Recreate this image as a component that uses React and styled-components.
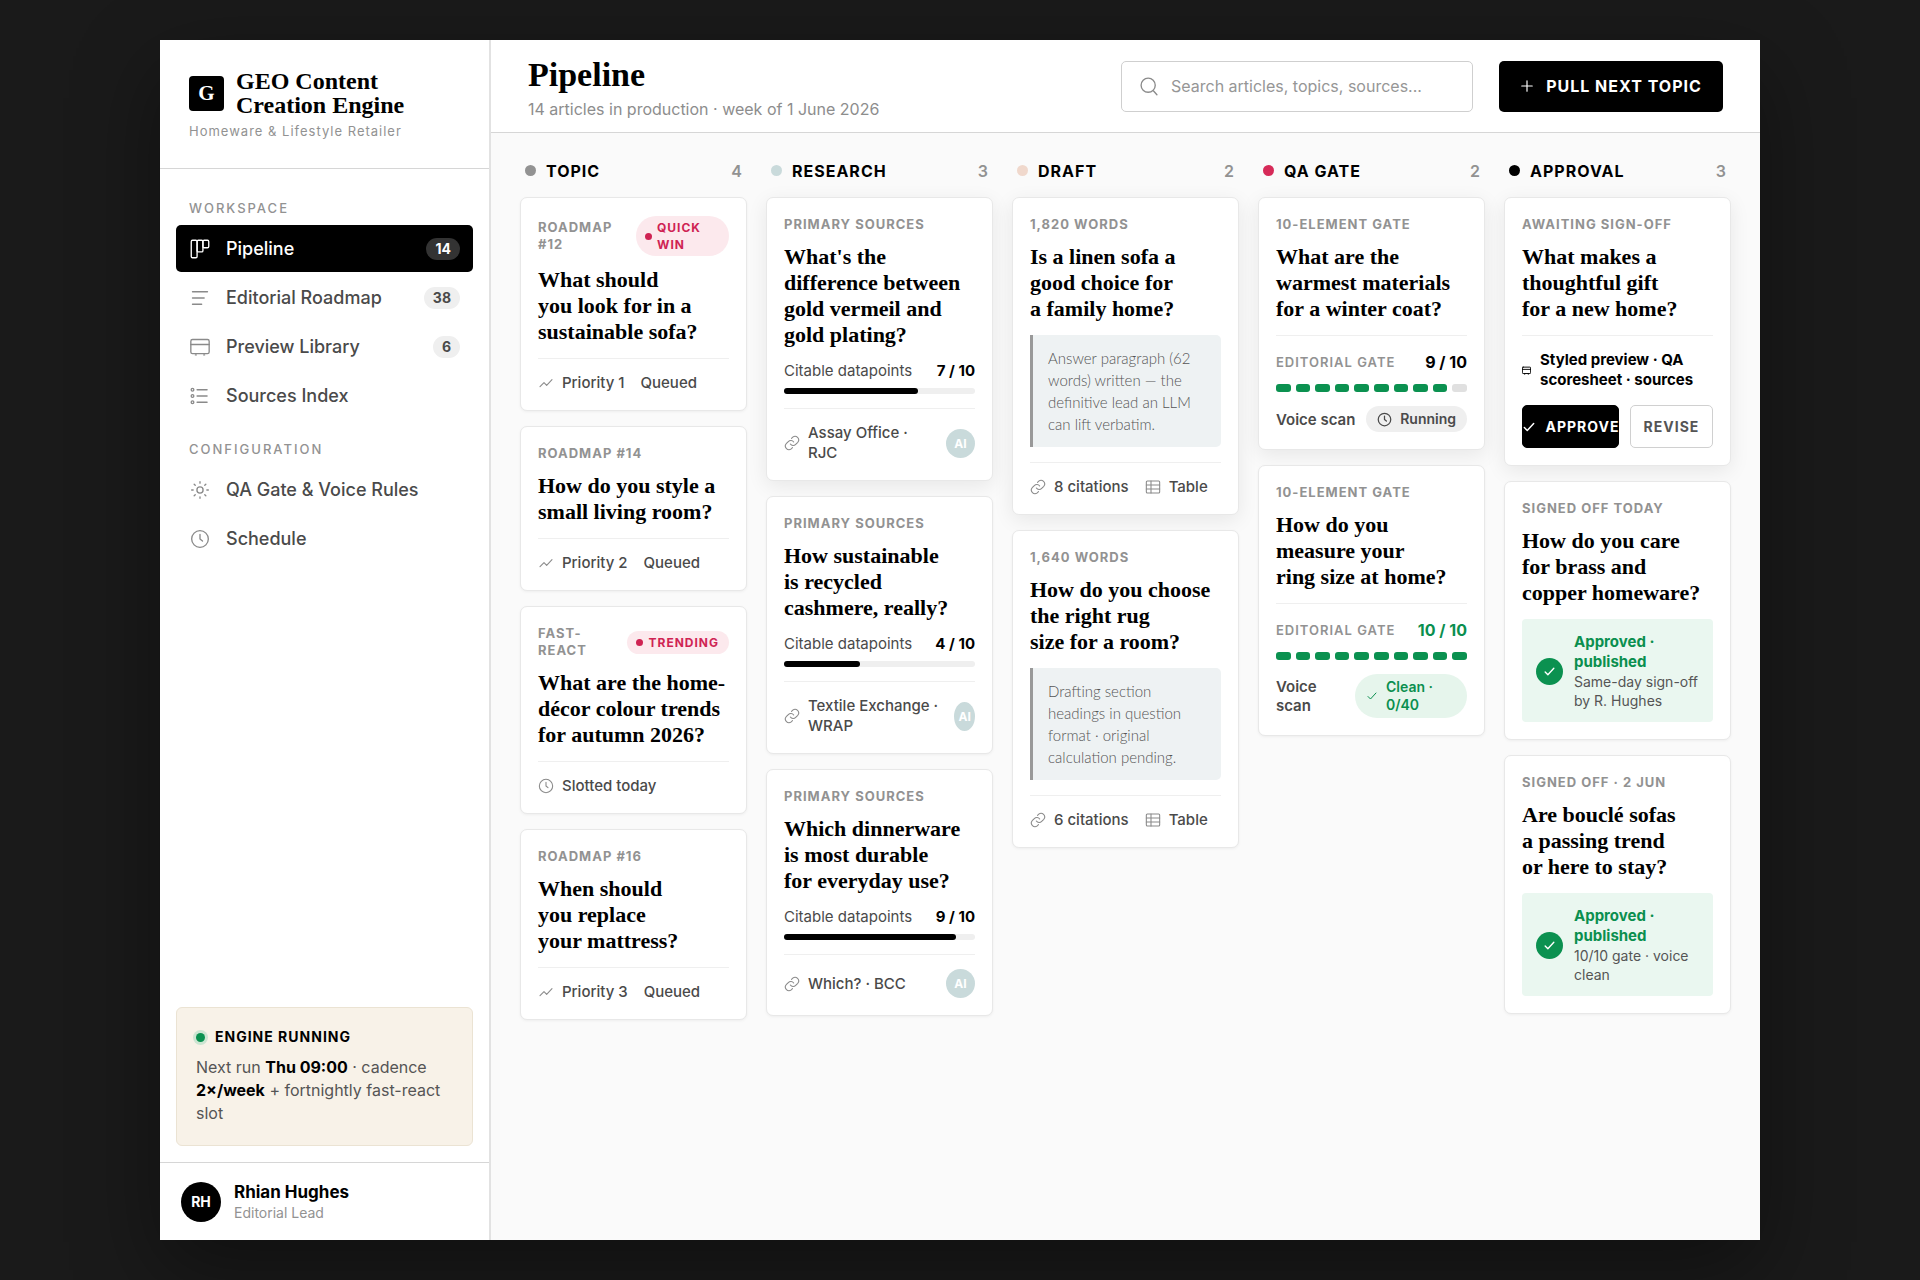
import React from 'react'
import styled, { createGlobalStyle, css } from 'styled-components'

const sans = `Inter, 'Liberation Sans', sans-serif`
const serif = `'Liberation Serif', serif`

const GlobalStyle = createGlobalStyle`
    * {
        box-sizing: border-box;
    }

    body {
        margin: 0;
        background: #1a1a1a;
        color: #000;
        font-family: ${sans};
    }

    h1, h2, h3, p, ul {
        margin: 0;
        padding: 0;
    }

    button, input {
        font-family: inherit;
    }
`

/* ---------- layout ---------- */

const Page = styled.div`
    min-height: 100vh;
    padding: 40px;
    display: flex;
    justify-content: center;
`

const Window = styled.div`
    width: 100%;
    max-width: 1600px;
    display: grid;
    grid-template-columns: 331px minmax(0, 1fr);
    background: #fff;
    box-shadow: 0 30px 80px rgba(0, 0, 0, 0.4);
`

const Sidebar = styled.aside`
    display: flex;
    flex-direction: column;
    border-right: 2px solid #e2e2e2;
`

const Main = styled.main`
    display: flex;
    flex-direction: column;
    background: #fafafa;
`

/* ---------- sidebar ---------- */

const Brand = styled.div`
    padding: 29px 29px 27px;
    border-bottom: 1px solid #d6d6d6;
`

const BrandRow = styled.div`
    display: flex;
    align-items: center;
    gap: 12px;
`

const Logo = styled.div`
    width: 35px;
    height: 35px;
    border-radius: 4px;
    background: #000;
    color: #fff;
    font: 700 21px/35px ${serif};
    text-align: center;
`

const BrandName = styled.h2`
    font: 700 24px/24px ${serif};
`

const BrandSub = styled.p`
    margin-top: 4px;
    color: #929292;
    font-size: 13px;
    line-height: 20px;
    letter-spacing: 1px;
`

const Nav = styled.nav`
    flex: 1;
    padding: 29px 16px 0;
`

const NavHeading = styled.h3`
    padding: 0 13px;
    margin-bottom: 7px;
    color: #929292;
    font-size: 13px;
    font-weight: 500;
    line-height: 20px;
    letter-spacing: 2px;
`

const NavList = styled.ul`
    display: flex;
    flex-direction: column;
    gap: 2px;
    margin-bottom: 20px;
    list-style: none;
`

const NavLink = styled.a`
    display: flex;
    align-items: center;
    gap: 16px;
    height: 47px;
    padding: 0 13px 0 14px;
    border-radius: 5px;
    color: #4a4a4a;
    font-size: 18px;
    font-weight: 500;
    text-decoration: none;

    svg {
        color: #8a8a8a;
    }

    ${({ $active }) => $active && css`
        background: #000;
        color: #fff;

        svg {
            color: #fff;
        }
    `}
`

const NavCount = styled.span`
    margin-left: auto;
    padding: 0 9px;
    border-radius: 11px;
    background: ${({ $active }) => ($active ? '#333' : '#efefef')};
    color: inherit;
    font-size: 14px;
    font-weight: 700;
    line-height: 22px;
`

const EngineBox = styled.section`
    margin: 16px;
    padding: 18px 19px 20px;
    border: 1px solid #ebe3d3;
    border-radius: 6px;
    background: #f8f2e8;
`

const EngineTitle = styled.h3`
    display: flex;
    align-items: center;
    gap: 10px;
    margin-bottom: 8px;
    font-size: 14px;
    font-weight: 700;
    line-height: 22px;
    letter-spacing: 1px;
`

const LiveDot = styled.span`
    width: 9px;
    height: 9px;
    border-radius: 50%;
    background: #0b9150;
    box-shadow: 0 0 0 3px #cde5d2;
`

const EngineText = styled.p`
    color: #555;
    font-size: 16px;
    line-height: 23px;
    white-space: pre-line;

    strong {
        color: #000;
    }
`

const User = styled.div`
    display: flex;
    align-items: center;
    gap: 13px;
    height: 78px;
    padding: 0 21px;
    border-top: 1px solid #d6d6d6;
`

const Avatar = styled.div`
    width: 40px;
    height: 40px;
    border-radius: 50%;
    background: #000;
    color: #fff;
    font-size: 14px;
    font-weight: 700;
    line-height: 40px;
    text-align: center;
`

const UserName = styled.p`
    font-size: 17px;
    font-weight: 700;
    line-height: 22px;
`

const UserRole = styled.p`
    color: #929292;
    font-size: 14px;
    line-height: 20px;
`

/* ---------- top bar ---------- */

const TopBar = styled.header`
    display: flex;
    align-items: center;
    gap: 26px;
    height: 93px;
    padding: 0 37px;
    border-bottom: 1px solid #d6d6d6;
    background: #fff;
`

const Heading = styled.div`
    flex: 1;
    padding-top: 5px;

    h1 {
        font: 700 34px/36px ${serif};
    }

    p {
        margin-top: 4px;
        color: #8d8d8d;
        font-size: 16px;
        line-height: 24px;
    }
`

const Search = styled.label`
    display: flex;
    align-items: center;
    gap: 12px;
    width: 352px;
    height: 51px;
    padding: 0 17px;
    border: 1px solid #cfcfcf;
    border-radius: 5px;
    color: #8a8a8a;

    input {
        flex: 1;
        min-width: 0;
        padding: 0;
        border: 0;
        outline: 0;
        background: none;
        font-size: 16px;
    }

    input::placeholder {
        color: #969696;
        opacity: 1;
    }
`

const PullButton = styled.button`
    display: flex;
    align-items: center;
    justify-content: center;
    gap: 12px;
    width: 224px;
    height: 51px;
    padding: 0;
    border: 0;
    border-radius: 5px;
    background: #000;
    color: #fff;
    font-size: 16px;
    font-weight: 700;
    letter-spacing: 1px;
    white-space: nowrap;
`

/* ---------- board ---------- */

const Board = styled.div`
    display: grid;
    grid-template-columns: repeat(5, minmax(0, 1fr));
    align-items: start;
    gap: 19px;
    padding: 26px 29px;
`

const Column = styled.section`
    display: flex;
    flex-direction: column;
    gap: 15px;
`

const ColumnHead = styled.header`
    display: flex;
    align-items: center;
    gap: 10px;
    height: 23px;
    padding: 0 5px;

    h2 {
        flex: 1;
        font-size: 16px;
        font-weight: 700;
        letter-spacing: 1px;
    }
`

const ColumnDot = styled.span`
    width: 11px;
    height: 11px;
    border-radius: 50%;
    background: ${({ $color }) => $color};
`

const ColumnCount = styled.span`
    color: #929292;
    font-size: 16px;
    font-weight: 600;
`

const CardBox = styled.article`
    padding: 18px 17px 17px;
    border: 1px solid #e8e8e8;
    border-radius: 7px;
    background: #fff;
    box-shadow: ${({ $raised }) => ($raised
        ? '0 5px 20px rgba(0, 0, 0, 0.08)'
        : '0 1px 3px rgba(0, 0, 0, 0.05)')};
`

const CardHead = styled.div`
    display: flex;
    align-items: center;
    justify-content: space-between;
    margin-bottom: 11px;
    color: #929292;
    font-size: 13px;
    font-weight: 700;
    line-height: 17px;
    letter-spacing: 1px;
    white-space: pre-line;
`

const Flag = styled.span`
    display: flex;
    align-items: center;
    gap: 5px;
    padding: 3px ${({ $wide }) => ($wide ? 28 : 10)}px 3px 9px;
    border-radius: 20px;
    background: #fce9ed;
    color: #cf2353;
    font-size: 12px;

    &::before {
        content: '';
        width: 7px;
        height: 7px;
        border-radius: 50%;
        background: currentColor;
    }
`

const CardTitle = styled.h3`
    margin-bottom: 13px;
    font: 700 22px/26px ${serif};
    white-space: pre-line;
`

const CardFoot = styled.footer`
    display: flex;
    align-items: center;
    gap: 16px;
    padding-top: 14px;
    border-top: 1px solid #efefef;
    color: #4a4a4a;
    font-size: 15px;
    font-weight: 500;
    line-height: 20px;
`

const Meta = styled.span`
    display: flex;
    align-items: center;
    gap: 8px;
    white-space: pre;

    svg {
        color: #8a8a8a;
    }
`

const AiBadge = styled.span`
    width: ${({ $narrow }) => ($narrow ? 23 : 29)}px;
    height: 29px;
    margin-left: auto;
    border-radius: 50%;
    background: #c9dadb;
    color: #fff;
    font-size: 12px;
    font-weight: 700;
    line-height: 29px;
    text-align: center;
`

const ProgressLabel = styled.div`
    display: flex;
    justify-content: space-between;
    margin-bottom: 7px;
    color: #4a4a4a;
    font-size: 15px;
    line-height: 20px;

    strong {
        color: #000;
    }
`

const Track = styled.div`
    height: 6px;
    margin-bottom: 14px;
    border-radius: 3px;
    background: #efefef;

    div {
        height: 100%;
        border-radius: 3px;
        background: #000;
    }
`

const Quote = styled.blockquote`
    margin: 0 0 15px;
    padding: 12px 15px;
    border-left: 3px solid #999;
    border-radius: 0 5px 5px 0;
    background: #eef2f3;
    color: #555;
    font: 300 15px/22px Lato, sans-serif;
    white-space: pre-line;
`

const Section = styled.div`
    padding-top: 14px;
    border-top: 1px solid #efefef;
`

const GateHead = styled.div`
    display: flex;
    justify-content: space-between;
    color: #929292;
    font-size: 13px;
    font-weight: 600;
    line-height: 24px;
    letter-spacing: 1px;

    strong {
        color: ${({ $passed }) => ($passed ? '#0a8f4f' : '#000')};
        font-size: 16px;
        font-weight: 700;
        letter-spacing: 0;
    }
`

const Segments = styled.div`
    display: grid;
    grid-template-columns: repeat(10, 1fr);
    gap: 5px;
    margin: 10px 0 14px;
`

const Segment = styled.span`
    height: 8px;
    border-radius: 3px;
    background: ${({ $on }) => ($on ? '#0b9150' : '#e0e0e0')};
`

const VoiceRow = styled.div`
    display: flex;
    align-items: center;
    justify-content: space-between;
    color: #4a4a4a;
    font-size: 15px;
    font-weight: 600;
    line-height: 19px;
    white-space: pre-line;
`

const VoicePill = styled.span`
    display: flex;
    align-items: center;
    gap: 8px;
    padding: 4px ${({ $clean }) => ($clean ? 34 : 11)}px 4px 11px;
    border-radius: 24px;
    background: ${({ $clean }) => ($clean ? '#e6f5ec' : '#efefef')};
    color: ${({ $clean }) => ($clean ? '#0a8f4f' : '#4a4a4a')};
    font-size: 14px;
    line-height: 18px;
`

const Bundle = styled.p`
    display: flex;
    align-items: center;
    gap: 9px;
    margin-bottom: 15px;
    font-size: 15px;
    font-weight: 700;
    line-height: 20px;
    white-space: pre-line;
`

const Actions = styled.div`
    display: grid;
    grid-template-columns: 97px 1fr;
    gap: 11px;
`

const ActionButton = styled.button`
    display: flex;
    align-items: center;
    justify-content: center;
    gap: 10px;
    height: 43px;
    padding: 0;
    border: 1px solid ${({ $primary }) => ($primary ? '#000' : '#d0d0d0')};
    border-radius: 5px;
    background: ${({ $primary }) => ($primary ? '#000' : '#fff')};
    color: ${({ $primary }) => ($primary ? '#fff' : '#555')};
    font-size: 14px;
    font-weight: 700;
    letter-spacing: 1px;
`

const Approved = styled.div`
    display: flex;
    align-items: center;
    gap: 11px;
    padding: 13px 14px 12px;
    border-radius: 4px;
    background: #eaf7f0;
    white-space: pre-line;

    strong {
        display: block;
        color: #0a8f4f;
        font-size: 15px;
        line-height: 20px;
    }

    p {
        color: #555;
        font-size: 14px;
        line-height: 19px;
    }
`

const CheckCircle = styled.span`
    display: flex;
    flex: none;
    align-items: center;
    justify-content: center;
    width: 27px;
    height: 27px;
    border-radius: 50%;
    background: #0b9150;
    color: #fff;
`

/* ---------- icons ---------- */

const paths = {
    kanban: <><rect x="1.500" y="1.500" width="7" height="21" rx="1.500" /><rect x="8.500" y="1.500" width="7" height="14" rx="1.500" /><rect x="15.500" y="1.500" width="7" height="9" rx="1.500" /></>,
    lines: <path d="M3 4.500h18M3 12h14M3 19.500h11" />,
    card: <><rect x="1" y="3" width="22" height="17" rx="2" /><path d="M1 9h22M6.500 21.500h1M16.500 21.500h1" /></>,
    list: <><path d="M8.500 4.500h12M8.500 12h12M8.500 19.500h12" /><circle cx="3" cy="4.500" r="1.600" /><circle cx="3" cy="12" r="1.600" /><circle cx="3" cy="19.500" r="1.600" /></>,
    sun: <><circle cx="12" cy="12" r="3.700" /><path d="M12 2v1.800M12 20.200V22M2 12h1.800M20.200 12H22M5 5l1.300 1.300M17.700 17.700L19 19M19 5l-1.300 1.300M6.300 17.700L5 19" /></>,
    clock: <><circle cx="12" cy="12" r="10" /><path d="M12 6.500V12l3 2.500" /></>,
    search: <><circle cx="11" cy="11" r="8.500" /><path d="M17.500 18l4 4.500" /></>,
    plus: <path d="M12 3v18M3 12h18" />,
    trend: <path d="M3 17.500l6-6 4 4 8-8.500" />,
    link: <><path d="M9.500 13.500a5.200 5.200 0 0 0 8 .6l3.200-3.200a5.400 5.400 0 0 0-7.600-7.600L11.300 5" /><path d="M14.500 10.500a5.200 5.200 0 0 0-8-.6l-3.200 3.200a5.400 5.400 0 0 0 7.600 7.600l1.800-1.700" /></>,
    table: <><rect x="2" y="3" width="20" height="18" rx="1.500" /><path d="M2 9h20M9 3v18M2 15h20" /></>,
    check: <path d="M4 13l5 5L20 6" />,
}

const Icon = ({ name, size = 16, stroke = 1.6 }) => (
    <svg
        width={size}
        height={size}
        viewBox="0 0 24 24"
        fill="none"
        stroke="currentColor"
        strokeWidth={stroke}
        strokeLinecap="round"
        strokeLinejoin="round"
        style={{ flexShrink: 0 }}
        aria-hidden="true"
    >
        {paths[name]}
    </svg>
)

/* ---------- data ---------- */

const workspace = [
    { icon: 'kanban', label: 'Pipeline', count: 14, active: true },
    { icon: 'lines', label: 'Editorial Roadmap', count: 38 },
    { icon: 'card', label: 'Preview Library', count: 6 },
    { icon: 'list', label: 'Sources Index' },
]

const configuration = [
    { icon: 'sun', label: 'QA Gate & Voice Rules' },
    { icon: 'clock', label: 'Schedule' },
]

const columns = [
    {
        name: 'TOPIC',
        color: '#929292',
        cards: [
            { label: 'ROADMAP\n#12', flag: 'QUICK\nWIN', title: 'What should\nyou look for in a\nsustainable sofa?', meta: [['trend', 'Priority 1'], [null, 'Queued']] },
            { label: 'ROADMAP #14', title: 'How do you style a\nsmall living room?', meta: [['trend', 'Priority 2'], [null, 'Queued']] },
            { label: 'FAST-\nREACT', flag: 'TRENDING', title: 'What are the home-\ndécor colour trends\nfor autumn 2026?', meta: [['clock', 'Slotted today']] },
            { label: 'ROADMAP #16', title: 'When should\nyou replace\nyour mattress?', meta: [['trend', 'Priority 3'], [null, 'Queued']] },
        ],
    },
    {
        name: 'RESEARCH',
        color: '#c9dadb',
        cards: [
            { raised: true, label: 'PRIMARY SOURCES', title: 'What\'s the\ndifference between\ngold vermeil and\ngold plating?', progress: 7, meta: [['link', 'Assay Office ·\nRJC']], ai: 'round' },
            { label: 'PRIMARY SOURCES', title: 'How sustainable\nis recycled\ncashmere, really?', progress: 4, meta: [['link', 'Textile Exchange ·\nWRAP']], ai: 'narrow' },
            { label: 'PRIMARY SOURCES', title: 'Which dinnerware\nis most durable\nfor everyday use?', progress: 9, meta: [['link', 'Which? · BCC']], ai: 'round' },
        ],
    },
    {
        name: 'DRAFT',
        color: '#f0d8cc',
        cards: [
            { raised: true, label: '1,820 WORDS', title: 'Is a linen sofa a\ngood choice for\na family home?', quote: 'Answer paragraph (62\nwords) written — the\ndefinitive lead an LLM\ncan lift verbatim.', meta: [['link', '8 citations'], ['table', 'Table']] },
            { label: '1,640 WORDS', title: 'How do you choose\nthe right rug\nsize for a room?', quote: 'Drafting section\nheadings in question\nformat · original\ncalculation pending.', meta: [['link', '6 citations'], ['table', 'Table']] },
        ],
    },
    {
        name: 'QA GATE',
        color: '#d62a58',
        cards: [
            { raised: true, label: '10-ELEMENT GATE', title: 'What are the\nwarmest materials\nfor a winter coat?', gate: 9, voice: 'Voice scan', result: 'Running' },
            { label: '10-ELEMENT GATE', title: 'How do you\nmeasure your\nring size at home?', gate: 10, voice: 'Voice\nscan', result: 'Clean ·\n0/40' },
        ],
    },
    {
        name: 'APPROVAL',
        color: '#000',
        cards: [
            { raised: true, label: 'AWAITING SIGN-OFF', title: 'What makes a\nthoughtful gift\nfor a new home?', bundle: 'Styled preview · QA\nscoresheet · sources' },
            { label: 'SIGNED OFF TODAY', title: 'How do you care\nfor brass and\ncopper homeware?', approved: 'Same-day sign-off\nby R. Hughes' },
            { label: 'SIGNED OFF · 2 JUN', title: 'Are bouclé sofas\na passing trend\nor here to stay?', approved: '10/10 gate · voice\nclean' },
        ],
    },
]

/* ---------- components ---------- */

const NavGroup = ({ title, items }) => (
    <>
        <NavHeading>{title}</NavHeading>
        <NavList>
            {items.map(({ icon, label, count, active }) => (
                <li key={label}>
                    <NavLink href="#" $active={active}>
                        <Icon name={icon} size={20} />
                        {label}
                        {count && <NavCount $active={active}>{count}</NavCount>}
                    </NavLink>
                </li>
            ))}
        </NavList>
    </>
)

const Progress = ({ value }) => (
    <>
        <ProgressLabel>
            <span>Citable datapoints</span>
            <strong>{value} / 10</strong>
        </ProgressLabel>
        <Track>
            <div style={{ width: `${value * 10}%` }} />
        </Track>
    </>
)

const Gate = ({ score, voice, result }) => {
    const passed = score === 10
    return (
        <Section>
            <GateHead $passed={passed}>
                <span>EDITORIAL GATE</span>
                <strong>{score} / 10</strong>
            </GateHead>
            <Segments>
                {Array.from({ length: 10 }, (_, i) => <Segment key={i} $on={i < score} />)}
            </Segments>
            <VoiceRow>
                <span>{voice}</span>
                <VoicePill $clean={passed}>
                    <Icon name={passed ? 'check' : 'clock'} size={passed ? 12 : 15} stroke={2} />
                    {result}
                </VoicePill>
            </VoiceRow>
        </Section>
    )
}

const Card = ({ card }) => (
    <CardBox $raised={card.raised}>
        <CardHead>
            <span>{card.label}</span>
            {card.flag && <Flag $wide={card.flag.includes('\n')}>{card.flag}</Flag>}
        </CardHead>
        <CardTitle>{card.title}</CardTitle>
        {card.progress && <Progress value={card.progress} />}
        {card.quote && <Quote>{card.quote}</Quote>}
        {card.gate && <Gate score={card.gate} voice={card.voice} result={card.result} />}
        {card.bundle && (
            <Section>
                <Bundle>
                    <Icon name="card" size={9} stroke={2.5} />
                    {card.bundle}
                </Bundle>
                <Actions>
                    <ActionButton $primary>
                        <Icon name="check" size={14} stroke={2.5} />
                        APPROVE
                    </ActionButton>
                    <ActionButton>REVISE</ActionButton>
                </Actions>
            </Section>
        )}
        {card.approved && (
            <Approved>
                <CheckCircle><Icon name="check" size={13} stroke={2.5} /></CheckCircle>
                <div>
                    <strong>{'Approved ·\npublished'}</strong>
                    <p>{card.approved}</p>
                </div>
            </Approved>
        )}
        {card.meta && (
            <CardFoot>
                {card.meta.map(([icon, text]) => (
                    <Meta key={text}>
                        {icon && <Icon name={icon} size={16} />}
                        {text}
                    </Meta>
                ))}
                {card.ai && <AiBadge $narrow={card.ai === 'narrow'}>AI</AiBadge>}
            </CardFoot>
        )}
    </CardBox>
)

const App = () => {
    return (
        <Page>
            <GlobalStyle />
            <Window>
                <Sidebar>
                    <Brand>
                        <BrandRow>
                            <Logo>G</Logo>
                            <BrandName>GEO Content<br />Creation Engine</BrandName>
                        </BrandRow>
                        <BrandSub>Homeware &amp; Lifestyle Retailer</BrandSub>
                    </Brand>
                    <Nav>
                        <NavGroup title="WORKSPACE" items={workspace} />
                        <NavGroup title="CONFIGURATION" items={configuration} />
                    </Nav>
                    <EngineBox>
                        <EngineTitle><LiveDot />ENGINE RUNNING</EngineTitle>
                        <EngineText>
                            Next run <strong>Thu 09:00</strong> · cadence{'\n'}
                            <strong>2×/week</strong> + fortnightly fast-react{'\n'}
                            slot
                        </EngineText>
                    </EngineBox>
                    <User>
                        <Avatar>RH</Avatar>
                        <div>
                            <UserName>Rhian Hughes</UserName>
                            <UserRole>Editorial Lead</UserRole>
                        </div>
                    </User>
                </Sidebar>
                <Main>
                    <TopBar>
                        <Heading>
                            <h1>Pipeline</h1>
                            <p>14 articles in production · week of 1 June 2026</p>
                        </Heading>
                        <Search>
                            <Icon name="search" size={20} />
                            <input type="search" aria-label="Search" placeholder="Search articles, topics, sources..." />
                        </Search>
                        <PullButton>
                            <Icon name="plus" size={14} stroke={2} />
                            PULL NEXT TOPIC
                        </PullButton>
                    </TopBar>
                    <Board>
                        {columns.map(({ name, color, cards }) => (
                            <Column key={name}>
                                <ColumnHead>
                                    <ColumnDot $color={color} />
                                    <h2>{name}</h2>
                                    <ColumnCount>{cards.length}</ColumnCount>
                                </ColumnHead>
                                {cards.map(card => <Card key={card.title} card={card} />)}
                            </Column>
                        ))}
                    </Board>
                </Main>
            </Window>
        </Page>
    )
}

export default App
